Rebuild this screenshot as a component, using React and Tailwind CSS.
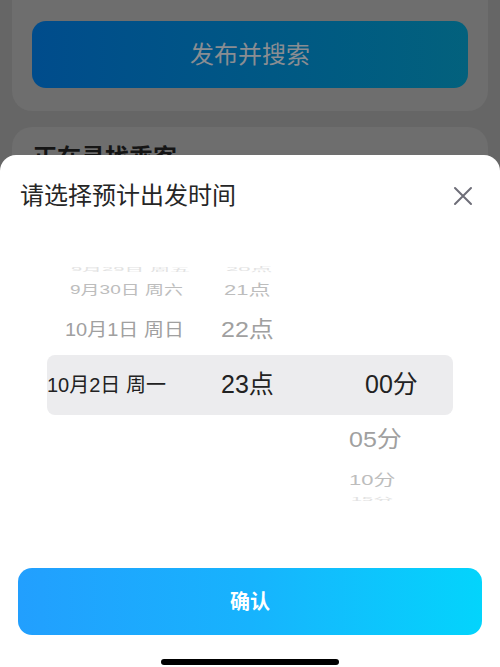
import React from 'react';

const FONT = { fontFamily: '"Liberation Sans", "Noto Sans CJK SC", sans-serif' };

const CloseIcon = () => (
  <svg width="20" height="20" viewBox="0 0 20 20" fill="none" stroke="#6e6e78" strokeWidth="2" strokeLinecap="round">
    <path d="M2 2 L18 18 M18 2 L2 18" />
  </svg>
);

const App = () => {
  return (
    <div className="relative w-[500px] h-[667px] overflow-hidden bg-[#666666]" style={FONT}>
      {/* page behind the sheet */}
      <div className="mx-[12px] bg-[#6e6e6e] rounded-b-[20px] px-[20px] pt-[21px] pb-[23px]">
        <div className="h-[67px] rounded-[14px] bg-linear-to-r from-[#004c8c] to-[#03617d] flex items-center justify-center">
          <span className="text-[24px] text-[#8a8d92]">发布并搜索</span>
        </div>
      </div>
      <div className="mx-[12px] mt-[16px] bg-[#6e6e6e] rounded-t-[20px] px-[21px] pt-[15px] h-[200px]">
        <div className="text-[24px] leading-[32px] font-bold text-[#151515]">正在寻找乘客</div>
      </div>

      {/* bottom sheet */}
      <div className="absolute inset-x-0 bottom-0 top-[155px] bg-white rounded-t-[16px] flex flex-col">
        <div className="flex items-center justify-between pl-[20px] pr-[27px] pt-[25px]">
          <h2 className="text-[24px] leading-[32px] text-[#262626]">请选择预计出发时间</h2>
          <CloseIcon />
        </div>

        {/* wheel picker */}
        <div className="mt-[50px] h-[239px] overflow-hidden">
          <div className="ml-[47px] w-[406px] h-[14px] flex items-center text-[#e2e2e2]">
            <span className="w-[174px]"><span className="inline-block ml-[24px] text-[20px] scale-y-[0.25]">9月29日 周五</span></span>
            <span className="w-[128px]"><span className="inline-block ml-[5px] text-[22px] scale-y-[0.25]">20点</span></span>
          </div>
          <div className="ml-[47px] w-[406px] h-[28px] flex items-center text-[#bdbdbd]">
            <span className="w-[174px]"><span className="inline-block ml-[23px] text-[19px] scale-y-[0.68]">9月30日 周六</span></span>
            <span className="w-[128px]"><span className="inline-block ml-[3px] text-[22px] scale-y-[0.66]">21点</span></span>
          </div>
          <div className="ml-[47px] w-[406px] h-[51px] flex items-center text-[#a0a0a0]">
            <span className="w-[174px]"><span className="inline-block ml-[18px] text-[20px] scale-y-[0.9]">10月1日 周日</span></span>
            <span className="w-[128px]"><span className="inline-block text-[25px] scale-y-[0.9]">22点</span></span>
          </div>
          <div className="ml-[47px] w-[406px] h-[60px] flex items-center rounded-[8px] bg-[#ececee] text-[#222222]">
            <span className="w-[174px] text-[20px]">10月2日 周一</span>
            <span className="w-[128px] text-[25px]">23点</span>
            <span className="ml-[16px] text-[25px]">00分</span>
          </div>
          <div className="ml-[47px] w-[406px] h-[50px] flex items-center text-[#a0a0a0]">
            <span className="ml-[302px] inline-block text-[25px] scale-y-[0.9]">05分</span>
          </div>
          <div className="ml-[47px] w-[406px] h-[30px] flex items-center text-[#bdbdbd]">
            <span className="ml-[302px] inline-block text-[22px] scale-y-[0.66]">10分</span>
          </div>
          <div className="ml-[47px] w-[406px] h-[8px] flex items-center text-[#e2e2e2]">
            <span className="ml-[304px] inline-block text-[20px] scale-y-[0.25]">15分</span>
          </div>
        </div>

        <button className="mx-[18px] mt-[67px] h-[67px] rounded-[14px] bg-linear-to-r from-[#229ffe] via-[#17b3fd] to-[#03d4fc] flex items-center justify-center">
          <span className="text-[20px] font-bold text-white">确认</span>
        </button>

        <div className="mt-[24px] mx-auto w-[178px] h-[6px] rounded-full bg-black" />
      </div>
    </div>
  );
};

export default App;
